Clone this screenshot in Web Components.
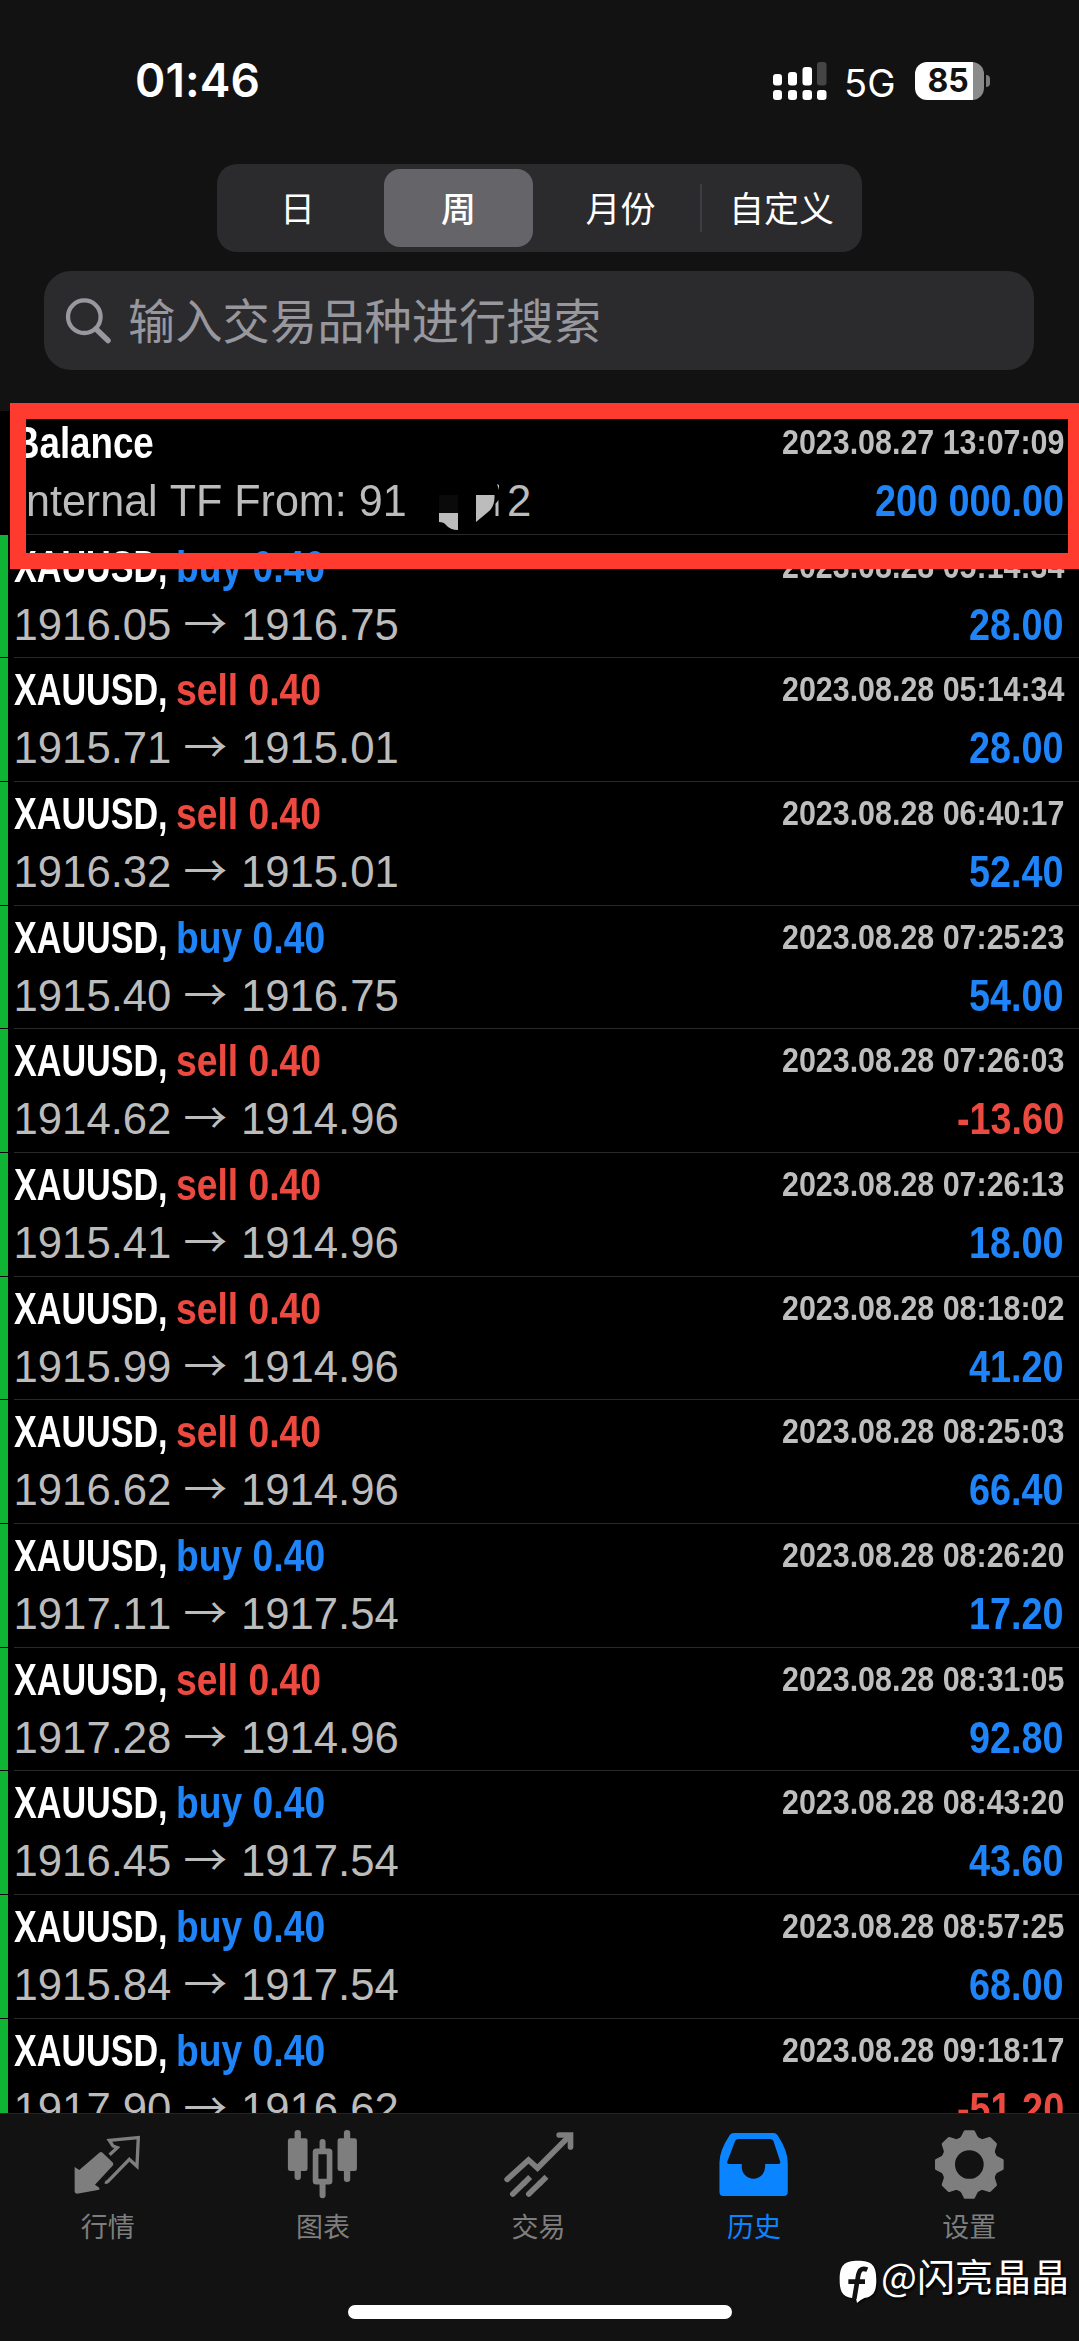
<!DOCTYPE html>
<html lang="zh-CN">
<head>
<meta charset="utf-8">
<meta name="viewport" content="width=device-width">
<title>历史</title>
<style>
html,body{margin:0;padding:0;background:#121212}
body{width:1079px;height:2341px;overflow:hidden;font-family:"Liberation Sans","Noto Sans CJK SC",sans-serif}
</style>
</head>
<body>
<history-screen></history-screen>
<script>
const define = (name, html, setup) => customElements.define(name, class extends HTMLElement {
  connectedCallback() {
    if (this.shadowRoot) return;
    const root = this.attachShadow({ mode: 'open' });
    root.innerHTML = typeof html === 'function' ? html(this) : html;
    if (setup) setup(this, root);
  }
});

/* Text squeezed horizontally; the host takes the squeezed width. */
define('condensed-text',
  `<style>:host{display:inline-block;white-space:pre;flex:none}span{display:inline-block;transform-origin:0 50%}</style><span><slot></slot></span>`,
  (el, root) => {
    const s = root.querySelector('span'), k = +el.getAttribute('k') || 1;
    const w = s.getBoundingClientRect().width;
    s.style.transform = `scaleX(${k})`;
    s.style.width = w + 'px';
    el.style.width = w * k + 'px';
  });

define('status-bar', `
<style>
:host{display:flex;height:164px;box-sizing:border-box;padding:52px 89px 0 135px;justify-content:space-between;color:#fff;font-family:Inter,sans-serif}
.time{font-size:46px;font-weight:600;line-height:57px;letter-spacing:.1px}
.right{display:flex;height:58px;align-items:center}
.net{font-size:38px;line-height:58px;margin:3px 0 0 17px;font-weight:400}
svg{display:block}
.bat{display:flex;align-items:center;margin-left:19px}
.cell{width:69px;height:38px;border-radius:12px;background:linear-gradient(90deg,#fff 58.5px,#8b8b8b 58.5px);color:#121212;font-size:32px;font-weight:700;line-height:38px;text-indent:13px}
.cap{width:4px;height:12px;border-radius:0 6px 6px 0;background:#7b7b7b;margin-left:2.5px}
</style>
<div class="time">01:46</div>
<div class="right">
<svg width="54" height="38" viewBox="0 0 54 38"><g fill="#fff"><rect x="0" y="12" width="9" height="11.500" rx="3"/><rect x="15" y="10" width="9" height="13.500" rx="3"/><rect x="29.500" y="5" width="9.500" height="18.500" rx="3"/><rect x="0" y="28" width="9" height="10" rx="3"/><rect x="15" y="28" width="9" height="10" rx="3"/><rect x="29.500" y="28" width="9.500" height="10" rx="3"/><rect x="44" y="28" width="9.500" height="10" rx="3"/></g><rect x="44" y="0" width="9.500" height="23.500" rx="3" fill="#454545"/></svg>
<div class="net">5G</div>
<div class="bat"><div class="cell">85</div><div class="cap"></div></div>
</div>`);

define('period-picker', `
<style>
:host{display:flex;width:645px;height:88px;margin:0 auto;background:#2b2b2e;border-radius:20px;color:#fff;font:400 35px/85px "Noto Sans CJK SC",sans-serif}
div{width:161px;flex:none;text-align:center;box-sizing:border-box;height:88px}
.on{width:149px;background:#656469;border-radius:16px;margin:5px 7px 5px 6px;height:78px;line-height:75px;font-weight:500}
i{width:2px;height:48px;margin:20px -1px;background:#3e3e42}
</style>
<div>日</div><div class="on">周</div><div>月份</div><i></i><div>自定义</div>`);

define('search-field', `
<style>
:host{display:flex;align-items:center;height:99px;width:990px;box-sizing:border-box;margin:19px 0 0 44px;padding-left:21px;background:#2b2b2e;border-radius:27px;color:#97979d;font:400 47.300px/92px "Noto Sans CJK SC",sans-serif}
svg{margin-right:16px;flex:none}span{margin-top:-3px;height:92px}
</style>
<svg width="47" height="47" viewBox="0 0 47 47" fill="none" stroke="#98989e"><circle cx="19.300" cy="19.700" r="16.300" stroke-width="4.300"/><path d="M31 32L43 43.500" stroke-width="5.500" stroke-linecap="round"/></svg>
<span>输入交易品种进行搜索</span>`);

define('deal-row', el => {
  const a = n => el.getAttribute(n) || '';
  const side = a('side');
  const title = side
    ? `<condensed-text k=".781">XAUUSD,</condensed-text><condensed-text class="side ${side}" k=".853">${side} 0.40</condensed-text>`
    : `<condensed-text class="bal" k=".84">Balance</condensed-text>`;
  const body = side
    ? `<span class="p">${a('from')}</span><span class="arrow">→</span><span class="p">${a('to')}</span>`
    : `<slot></slot>`;
  const neg = a('profit').startsWith('-');
  return `
<style>
:host{display:flex;height:123.667px;flex:none;font-kerning:none}
.bar{width:8px;background:#10b434;margin:0 6px 1px 0;flex:none}
.bar.none{background:none}
.main{flex:1;box-sizing:border-box;border-bottom:1px solid #292929;padding:3px 15px 0 0;margin-right:0}
.line{display:flex;justify-content:space-between;height:58px;line-height:58px;font-size:43.700px;white-space:pre}
.line>div{display:flex}
.t{font-weight:700;color:#fff}
.bal{margin-left:-1px}
.side{margin-left:8.500px}
.buy{color:#1e84f7}.sell{color:#ec4a40}
.date{font-size:35px;font-weight:700;color:#bebebe;line-height:56px}
.b{color:#bcbcbc}
.arrow{font-family:"Noto Sans CJK SC",sans-serif;width:46px;margin:0 12.500px 0 11px;line-height:51px;text-align:center}
.profit{font-weight:700}
.b>div:first-child{margin-left:-.5px}
</style>
<div class="bar ${side ? '' : 'none'}"></div>
<div class="main">
<div class="line t"><div>${title}</div><condensed-text class="date" k=".869">${a('date')}</condensed-text></div>
<div class="line b"><div>${body}</div><condensed-text class="profit ${neg ? 'sell' : 'buy'}" k=".865">${a('profit')}</condensed-text></div>
</div>`;
});

define('deal-list', `
<style>
:host{display:flex;flex-direction:column;background:#000;height:1702px;overflow:hidden;margin-top:41px}
</style>
<deal-row date="2023.08.27 13:07:09" profit="200 000.00"><condensed-text k=".986">Internal TF From: 91</condensed-text><svg style="flex:none" width="101" height="58" viewBox="406 472 101 58"><rect x="439" y="495" width="19" height="18" fill="#0a0a0a"/><path d="M439 513H458V530Q450 530 446 525Q444 522 439 522ZM476 495H494.500Q495 507 488 512L476 522ZM494.500 505L498.500 500V516H495.500V504ZM497 484L499 485V490Z" fill="#bcbcbc"/></svg>2</deal-row>
`, (el, root) => {
  [
    ['buy','1916.05','1916.75','05:14:34','28.00'],
    ['sell','1915.71','1915.01','05:14:34','28.00'],
    ['sell','1916.32','1915.01','06:40:17','52.40'],
    ['buy','1915.40','1916.75','07:25:23','54.00'],
    ['sell','1914.62','1914.96','07:26:03','-13.60'],
    ['sell','1915.41','1914.96','07:26:13','18.00'],
    ['sell','1915.99','1914.96','08:18:02','41.20'],
    ['sell','1916.62','1914.96','08:25:03','66.40'],
    ['buy','1917.11','1917.54','08:26:20','17.20'],
    ['sell','1917.28','1914.96','08:31:05','92.80'],
    ['buy','1916.45','1917.54','08:43:20','43.60'],
    ['buy','1915.84','1917.54','08:57:25','68.00'],
    ['buy','1917.90','1916.62','09:18:17','-51.20']
  ].forEach(([side, from, to, time, profit]) => {
    const r = document.createElement('deal-row');
    Object.entries({ side, from, to, date: '2023.08.28 ' + time, profit }).forEach(([k, v]) => r.setAttribute(k, v));
    root.append(r);
  });
});

define('tab-item', `
<style>
:host{display:flex;flex:1;flex-direction:column;align-items:center;color:#7e7e7e;font:400 27px/40px "Noto Sans CJK SC",sans-serif}
:host([active]){color:#0a84ff}
div{height:80px;width:80px;margin-bottom:2px}
</style>
<div><slot name="icon"></slot></div><slot></slot>`);

define('tab-bar', `
<style>
:host{display:flex;box-sizing:border-box;height:228px;border-top:1px solid #242424;background:#121212;padding:10px 2px 0 0}
svg{display:block;width:80px;height:80px}
</style>
<tab-item><svg slot="icon" viewBox="23.100 12 240 240"><path fill="currentColor" d="M43 141L57 150 117 98Q122 94 127 98L158 128Q161 132 157 137L104 194 117 203V209L50 221Q43 221 43 214Z"/><path fill="none" stroke="currentColor" stroke-width="10" stroke-linejoin="miter" d="M148 104L171 83 158 78 147 61 234 53 230 139 207 118 143 184Q139 188 134 186"/></svg>行情</tab-item>
<tab-item><svg slot="icon" viewBox="669.300 12 240 240"><g fill="currentColor"><rect x="684" y="55" width="59" height="98" rx="7"/><rect x="704" y="30" width="19" height="150" rx="9"/><rect x="833" y="55" width="58" height="98" rx="7"/><rect x="852" y="30" width="19" height="156" rx="9"/><rect x="779" y="57" width="18" height="40" rx="9"/><rect x="779" y="182" width="18" height="53" rx="9"/></g><rect x="767" y="94" width="42" height="91" rx="2" fill="none" stroke="currentColor" stroke-width="17"/></svg>图表</tab-item>
<tab-item><svg slot="icon" viewBox="25.500 12 240 240"><g fill="none" stroke="currentColor" stroke-width="17" stroke-linecap="round"><path stroke-linejoin="miter" d="M50 178L114 120 141 144 236 49"/><path stroke-linejoin="miter" d="M206 45H240V81"/><path d="M67 222L100 190M115 222L148 190"/><path stroke-linecap="butt" d="M98 192L119 171M146 192L168 170"/></g></svg>交易</tab-item>
<tab-item active><svg slot="icon" viewBox="671.700 12 240 240"><path fill="currentColor" fill-rule="evenodd" d="M732 39H850Q858 39 862 45Q893 92 893 128V216Q893 228 881 228H700Q688 228 688 216V128Q688 92 719 45Q723 39 732 39ZM745 57Q738 57 735 63L712 124Q709 132 718 132H755V141A35 35 0 0 0 825 141V132H863Q873 132 870 124L850 63Q847 57 840 57Z"/></svg>历史</tab-item>
<tab-item><svg slot="icon" viewBox="328 12 240 240"><circle cx="449" cy="133.500" r="64" fill="none" stroke="currentColor" stroke-width="42"/><g fill="currentColor" stroke="currentColor" stroke-width="10" stroke-linejoin="round" id="g"></g></svg>设置</tab-item>`,
(el, root) => {
  root.getElementById('g').innerHTML = Array.from({ length: 8 }, (_, i) =>
    `<path transform="rotate(${i * 45} 449 133.500)" d="M437 35.500H461L470 53 478 62H420L428 53Z"/>`).join('');
});

define('author-mark', `
<style>
:host{display:flex;align-items:center;height:60px;color:#fff;white-space:nowrap;font:400 38px/60px "Noto Sans CJK SC",sans-serif;text-shadow:2px 2px 2px #000}
svg{flex:none;margin-right:4px;filter:drop-shadow(1px 1px 1px #000)}
span{margin-top:-14px}
</style>
<svg width="38" height="44" viewBox="56 421 114 132"><path fill="#fff" d="M113 423C155 423 168 437 168 480C168 518 158 531 132 535Q121 540 110 550L107 536C69 535 58 521 58 480C58 437 71 423 113 423Z"/><path fill="none" stroke="#121212" stroke-width="14" d="M141 450C122 442 116 453 113 471L102 537M84 486H134"/></svg>
<span>@闪亮晶晶</span>`);

define('history-screen', `
<style>
:host{display:flex;flex-direction:column;position:relative;width:1079px;height:2341px;overflow:hidden;background:#121212}
.frame{position:absolute;left:10px;top:403px;width:1042px;height:134px;border:16.800px solid #ff3b30}
.home{position:absolute;left:348px;top:2305px;width:384px;height:14px;border-radius:7px;background:#fff}
author-mark{position:absolute;left:839px;top:2252px}
</style>
<status-bar></status-bar>
<period-picker></period-picker>
<search-field></search-field>
<deal-list></deal-list>
<tab-bar></tab-bar>
<div class="frame"></div>
<div class="home"></div>
<author-mark></author-mark>`);
</script>
</body>
</html>
